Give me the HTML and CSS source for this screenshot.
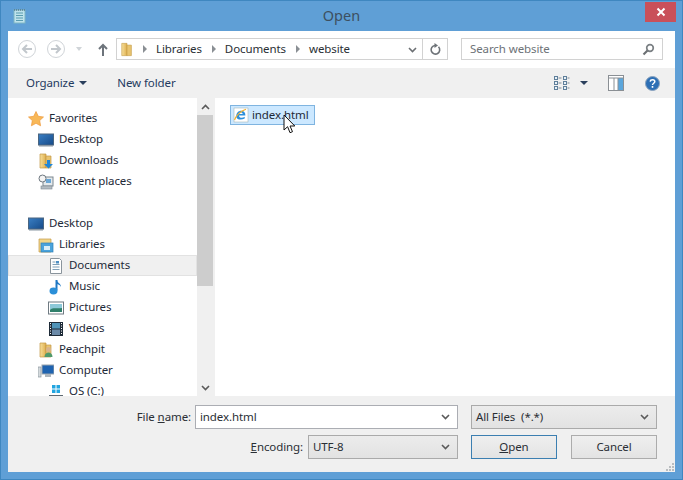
FILE: index.html
```html
<!DOCTYPE html>
<html lang="en">
<head>
<meta charset="utf-8">
<title>Open</title>
<link rel="stylesheet" href="styles.css">
</head>
<body>
<svg class="defs" width="0" height="0" aria-hidden="true">
  <defs>
    <linearGradient id="scr" x1="0" y1="0" x2="1" y2="1"><stop offset="0" stop-color="#3a7fc4"/><stop offset="1" stop-color="#164a88"/></linearGradient>
    <linearGradient id="fold" x1="0" y1="0" x2="1" y2="0"><stop offset="0" stop-color="#f6df9b"/><stop offset="1" stop-color="#dfb04f"/></linearGradient>
    <symbol id="desk" viewBox="0 0 16 16"><rect x="0.5" y="2" width="15" height="11" fill="url(#scr)" stroke="#4a6580"/><rect x="1" y="13" width="14" height="1.5" fill="#8a97a3"/></symbol>
    <symbol id="folder" viewBox="0 0 16 16"><path d="M2 1h6v14H2z" fill="url(#fold)" stroke="#c49a45" stroke-width=".7"/><path d="M8 3h5v12H8z" fill="#e9c46f" stroke="#c49a45" stroke-width=".7"/></symbol>
  </defs>
</svg>
<div class="dialog">
  <header class="titlebar">
    <svg class="app-icon" width="15" height="15" viewBox="0 0 15 15"><rect x="2" y="1" width="11" height="13" fill="#bfe3ec" stroke="#7fb6c4"/><path d="M4 4h7M4 6.5h7M4 9h7M4 11.5h7" stroke="#5b9db0"/><path d="M2 1h11" stroke="#48606a" stroke-dasharray="1 1"/></svg>
    <div class="title">Open</div>
    <div class="close"><svg width="10" height="10" viewBox="0 0 10 10"><path d="M1.5 1.5l7 7M8.500 1.500l-7 7" stroke="#fff" stroke-width="2"/></svg></div>
  </header>
  <div class="panel">
    <nav class="navbar">
      <span class="round"><svg width="12" height="10" viewBox="0 0 12 10"><path d="M11 5H2M6 1L2 5l4 4" fill="none" stroke="#c2c7cc" stroke-width="2"/></svg></span>
      <span class="round"><svg width="12" height="10" viewBox="0 0 12 10"><path d="M1 5h9M6 1l4 4-4 4" fill="none" stroke="#c2c7cc" stroke-width="2"/></svg></span>
      <span class="caret-soft"></span>
      <svg class="up" width="10" height="13" viewBox="0 0 10 13"><path d="M5 13V2M1 6l4-4 4 4" fill="none" stroke="#6d747b" stroke-width="2"/></svg>
      <div class="address">
        <svg class="crumb-icon" width="14" height="17" viewBox="0 0 14 17"><use href="#folder" width="14" height="17"/></svg>
        <span class="sep"></span><span class="crumb">Libraries</span>
        <span class="sep"></span><span class="crumb">Documents</span>
        <span class="sep"></span><span class="crumb">website</span>
        <svg class="chev addr-chev" width="9" height="6" viewBox="0 0 9 6"><path d="M1 1l3.500 3.500L8 1" fill="none" stroke="#6b6f73" stroke-width="1.600"/></svg>
        <span class="refresh"><svg width="12" height="13" viewBox="0 0 12 13"><path d="M9.500 3.800A4.300 4.300 0 1 1 6 2.500" fill="none" stroke="#6d7277" stroke-width="1.600"/><path d="M5.500 0v5L9 2.500z" fill="#6d7277"/></svg></span>
      </div>
      <div class="search">
        <span class="search-text">Search website</span>
        <svg width="13" height="13" viewBox="0 0 13 13"><circle cx="8" cy="5" r="3.300" fill="none" stroke="#7b8084" stroke-width="1.700"/><path d="M5.500 7.500L1.500 11.500" stroke="#6b6f73" stroke-width="2.200"/></svg>
      </div>
    </nav>
    <div class="toolbar">
      <span class="tool">Organize</span><span class="caret"></span>
      <span class="tool newfolder">New folder</span>
      <svg class="views" width="16" height="14" viewBox="0 0 16 14"><g fill="#e8f1f8" stroke="#5f7f9a"><rect x=".5" y=".5" width="3" height="3"/><rect x=".5" y="5.500" width="3" height="3"/><rect x=".5" y="10.500" width="3" height="3"/><rect x="9.500" y=".5" width="3" height="3"/><rect x="9.500" y="5.500" width="3" height="3"/><rect x="9.500" y="10.500" width="3" height="3"/></g><path d="M4.500 2h3M4.500 7h3M4.500 12h3M13.500 2h2M13.500 7h2M13.500 12h2" stroke="#7d8a95"/></svg>
      <span class="caret views-caret"></span>
      <svg class="pane-icon" width="16" height="16" viewBox="0 0 16 16"><rect x=".5" y=".5" width="15" height="15" fill="#fff" stroke="#8a8f94"/><rect x="10" y="3" width="5" height="12" fill="#5ba6dc"/><path d="M1 3h14M6 3v12M10 3v12" stroke="#8a8f94"/></svg>
      <svg class="help" width="15" height="15" viewBox="0 0 15 15"><circle cx="7.500" cy="7.500" r="7" fill="#2d6fb5" stroke="#8aa2bc"/><path d="M5.200 5.600c.3-2.400 4.600-2.400 4.600 0 0 1.700-2.300 1.600-2.300 3.400" fill="none" stroke="#fff" stroke-width="1.500"/><rect x="6.700" y="10" width="1.600" height="1.800" fill="#fff"/></svg>
    </div>
    <main class="browser">
      <aside class="tree">
        <div class="row lvl0"><svg width="16" height="16" viewBox="0 0 16 16"><path d="M8 .5l2.300 4.800 5.200.7-3.800 3.600.9 5.200L8 12.300l-4.600 2.500.9-5.200L.5 6l5.200-.7z" fill="#f8b858" stroke="#ee9a3c" stroke-width=".7"/></svg><span>Favorites</span></div>
        <div class="row lvl1"><svg width="16" height="16"><use href="#desk" width="16" height="16"/></svg><span>Desktop</span></div>
        <div class="row lvl1"><svg width="16" height="16" viewBox="0 0 16 16"><use href="#folder" width="16" height="16"/><path d="M9 7h3v4h3l-4.500 4.500L6 11h3z" fill="#1f86d8"/></svg><span>Downloads</span></div>
        <div class="row lvl1"><svg width="16" height="16" viewBox="0 0 16 16"><rect x="5" y="3" width="10" height="9" fill="#e4e9ec" stroke="#7c8790"/><circle cx="4.500" cy="4.500" r="3.500" fill="#f4f4f4" stroke="#6e7880"/><rect x="3" y="12" width="11" height="3" fill="#b4bcc2" stroke="#7c8790" stroke-width=".6"/><rect x="8" y="5" width="5" height="4" fill="#6aa7d6"/></svg><span>Recent places</span></div>
        <div class="row spacer"></div>
        <div class="row lvl0"><svg width="16" height="16"><use href="#desk" width="16" height="16"/></svg><span>Desktop</span></div>
        <div class="row lvl1"><svg width="16" height="16" viewBox="0 0 16 16"><path d="M1 2h12v13H1z" fill="#f0d68a" stroke="#c49a45" stroke-width=".7"/><rect x="3" y="6" width="12" height="9" fill="#4aa3dc" stroke="#2f80b8" stroke-width=".7"/><rect x="6" y="9" width="6" height="4" fill="#d8eef9"/></svg><span>Libraries</span></div>
        <div class="row lvl2 active"><svg width="16" height="16" viewBox="0 0 16 16"><path d="M2.500.5h9l2 2v13h-11z" fill="#fff" stroke="#8a949c"/><path d="M4.500 4h3M4.500 6.500h7M4.500 9h7M4.500 11.500h7" stroke="#7f9fb8"/><rect x="8" y="3" width="3" height="2.500" fill="#4d8fc4"/></svg><span>Documents</span></div>
        <div class="row lvl2"><svg width="16" height="16" viewBox="0 0 16 16"><path d="M8.500 1v10.500" stroke="#1f78c4" stroke-width="2"/><ellipse cx="5.500" cy="12" rx="4" ry="3.400" fill="#2b8fd8"/><path d="M9 1c0 3 4 3 4 7-1-2-2-2.500-4-3z" fill="#1f78c4"/></svg><span>Music</span></div>
        <div class="row lvl2"><svg width="16" height="16" viewBox="0 0 16 16"><rect x=".5" y="2" width="15" height="12" fill="#fff" stroke="#6f7a82"/><rect x="2" y="4" width="12" height="8" fill="#8cc8d8"/><path d="M2 10c3-3 6-1 12-2v4H2z" fill="#2f7f6a"/></svg><span>Pictures</span></div>
        <div class="row lvl2"><svg width="16" height="16" viewBox="0 0 16 16"><rect x="1" y="1" width="14" height="14" fill="#1e2b38"/><rect x="4" y="2" width="8" height="5.500" fill="#4f93b8"/><rect x="4" y="8.500" width="8" height="5.500" fill="#6b8aa8"/><path d="M2 2.500h1M2 5h1M2 7.500h1M2 10h1M2 12.500h1M13 2.500h1M13 5h1M13 7.500h1M13 10h1M13 12.500h1" stroke="#fff"/></svg><span>Videos</span></div>
        <div class="row lvl1"><svg width="16" height="16" viewBox="0 0 16 16"><use href="#folder" width="16" height="16"/><circle cx="10.500" cy="7.500" r="2.500" fill="#d9b48c"/><path d="M6.500 15c0-6 8-6 8 0z" fill="#4f9a6c"/></svg><span>Peachpit</span></div>
        <div class="row lvl1"><svg width="16" height="16" viewBox="0 0 16 16"><rect x="0" y="4" width="3" height="10" fill="#d5dadd" stroke="#8a949c" stroke-width=".7"/><rect x="4" y="2" width="12" height="9" fill="#1f63b0" stroke="#9aa4ac"/><rect x="7" y="11" width="6" height="3" fill="#aeb6bc"/></svg><span>Computer</span></div>
        <div class="row lvl2 clip"><svg width="16" height="16" viewBox="0 0 16 16"><path d="M4 1h3.500v3.500H4zM8.500 1H12v3.500H8.500zM4 5.500h3.500V9H4zM8.500 5.500H12V9H8.500z" fill="#22a5e0"/><path d="M1 11h14v4H1z" fill="#5f6a72"/></svg><span>OS (C:)</span></div>
      </aside>
      <div class="scrollbar">
        <div class="sb-btn"><svg width="9" height="6" viewBox="0 0 9 6"><path d="M1 5l3.500-3.500L8 5" fill="none" stroke="#5a5a5a" stroke-width="1.600"/></svg></div>
        <div class="sb-thumb"></div>
        <div class="sb-track"></div>
        <div class="sb-btn"><svg width="9" height="6" viewBox="0 0 9 6"><path d="M1 1l3.500 3.500L8 1" fill="none" stroke="#5a5a5a" stroke-width="1.600"/></svg></div>
      </div>
      <section class="files">
        <div class="file">
          <svg width="16" height="16" viewBox="0 0 16 16"><rect x="1" y="1" width="14" height="14" fill="#fff" stroke="#9aa" stroke-width=".5"/><path d="M3.200 9.400c.1-3.600 2.200-5.700 5-5.700 2.600 0 4.300 1.900 4.200 4.700H6c.1 2.800 3.600 3 5.700 1.300v1.900c-3.900 2-8.600.9-8.500-2.200zM6 6.900h3.700C9.700 4.900 6.300 4.900 6 6.900z" fill="#2a8fdc"/><path d="M1.500 13c1-3.700 6-9 11.500-10.700" fill="none" stroke="#f2b233" stroke-width="1.200"/></svg>
          <span>index.html</span>
        </div>
        <svg class="cursor" width="13" height="20" viewBox="0 0 13 20"><path d="M1 1v15l3.600-3.300 2.400 6 2.500-1-2.500-5.700h4.800z" fill="#fff" stroke="#111"/></svg>
      </section>
    </main>
  </div>
  <footer class="bottom">
    <label class="lbl name-lbl"><span>File <u>n</u>ame:</span></label>
    <div class="field input"><span>index.html</span><svg class="chev" width="9" height="6" viewBox="0 0 9 6"><path d="M1 1l3.500 3.500L8 1" fill="none" stroke="#5a5a5a" stroke-width="1.600"/></svg></div>
    <div class="field select types"><span>All Files&nbsp; (*.*)</span><svg class="chev" width="9" height="6" viewBox="0 0 9 6"><path d="M1 1l3.500 3.500L8 1" fill="none" stroke="#5a5a5a" stroke-width="1.600"/></svg></div>
    <label class="lbl enc-lbl"><span><u>E</u>ncoding:</span></label>
    <div class="field select enc"><span>UTF-8</span><svg class="chev" width="9" height="6" viewBox="0 0 9 6"><path d="M1 1l3.500 3.500L8 1" fill="none" stroke="#5a5a5a" stroke-width="1.600"/></svg></div>
    <div class="buttons">
      <button class="btn primary"><u>O</u>pen</button>
      <button class="btn">Cancel</button>
    </div>
    <svg class="grip" width="10" height="10" viewBox="0 0 10 10"><g fill="#b9bdc0"><rect x="7" y="1" width="2" height="2"/><rect x="4" y="4" width="2" height="2"/><rect x="7" y="4" width="2" height="2"/><rect x="1" y="7" width="2" height="2"/><rect x="4" y="7" width="2" height="2"/><rect x="7" y="7" width="2" height="2"/></g></svg>
  </footer>
</div>
</body>
</html>
```
FILE: styles.css
```css
* { box-sizing: border-box; }
html, body { margin: 0; height: 100%; }
body { font-family: "Noto Sans", "Open Sans", sans-serif; font-size: 11.5px; letter-spacing: -0.1px; color: #1e2a38; overflow: hidden; }
.defs { position: absolute; }
.dialog { width: 683px; height: 480px; display: flex; flex-direction: column; background: #5f9fd6; border: 1px solid #3f87c0; padding: 0 7px 7px; }
.titlebar { height: 30px; display: flex; align-items: center; position: relative; flex: none; }
.app-icon { margin-left: 4px; }
.title { position: absolute; left: 0; right: 0; top: 4px; text-align: center; font-size: 14.5px; line-height: 20px; letter-spacing: 0; color: #3d4f60; }
.close { position: absolute; top: 1px; right: -1px; width: 31px; height: 20px; background: #c9505a; display: flex; align-items: center; justify-content: center; }
.panel { background: #fff; flex: none; height: 365px; display: flex; flex-direction: column; }
.navbar { height: 37px; flex: none; display: flex; align-items: center; padding: 0 0 1px 10px; }
.round { width: 18px; height: 18px; border: 1.500px solid #d0d4d8; border-radius: 50%; display: flex; align-items: center; justify-content: center; margin-right: 11px; }
.caret-soft { width: 0; height: 0; border: 3.500px solid transparent; border-top: 4px solid #d0d4d8; border-bottom: 0; margin-right: 16px; }
.up { margin-right: 8px; }
.address { width: 332px; height: 22px; border: 1px solid #d2d2d2; display: flex; align-items: center; padding-left: 3px; position: relative; color: #2a2f35; }
.crumb-icon { margin-right: 9px; }
.sep { width: 0; height: 0; border: 4px solid transparent; border-left: 4px solid #8a8f94; border-right: 0; margin-right: 9px; }
.crumb { margin-right: 10px; padding-bottom: 2px; }
.addr-chev { position: absolute; right: 30px; top: 8px; }
.refresh { position: absolute; right: 0; top: 0; bottom: 0; width: 25px; border-left: 1px solid #d2d2d2; display: flex; align-items: center; justify-content: center; }
.search { width: 202px; height: 22px; border: 1px solid #d2d2d2; margin-left: 13px; display: flex; align-items: center; justify-content: space-between; padding: 0 7px 0 8px; color: #6d7277; }
.search-text { padding-bottom: 2px; }
.toolbar { height: 30px; flex: none; background: #f0f0f0; display: flex; align-items: center; padding-left: 18px; color: #1f3a5f; }
.tool { padding-bottom: 2px; }
.caret { width: 0; height: 0; border: 4px solid transparent; border-top: 4px solid #2a3f5c; border-bottom: 0; margin-left: 5px; }
.newfolder { margin-left: 30px; }
.views { margin-left: auto; }
.views-caret { margin-left: 10px; }
.pane-icon { margin-left: 20px; }
.help { margin-left: 21px; margin-right: 15px; }
.browser { flex: 1; display: flex; min-height: 0; }
.tree { width: 189px; flex: none; padding-top: 10px; color: #1e2a38; overflow: hidden; }
.row { height: 21px; display: flex; align-items: center; gap: 5px; flex: none; }
.row span, .file span, .lbl span, .field span { padding-bottom: 2px; }
.spacer { height: 21px; }
.lvl0 { padding-left: 20px; }
.lvl1 { padding-left: 30px; }
.lvl2 { padding-left: 40px; }
.active { background: #f0f0f0; border: 1px solid #e2e2e2; padding-left: 39px; }
.scrollbar { width: 16px; flex: none; display: flex; flex-direction: column; background: #f0f0f0; }
.sb-btn { height: 17px; display: flex; align-items: center; justify-content: center; flex: none; }
.sb-thumb { height: 171px; background: #cdcdcd; flex: none; }
.sb-track { flex: 1; }
.files { flex: 1; padding: 7px 0 0 15px; position: relative; border-left: 2px solid #f0f0f0; }
.file { width: 85px; height: 20px; background: #cce8ff; border: 1px solid #7fb4e0; display: flex; align-items: center; gap: 3px; padding-left: 2px; color: #1e2a38; }
.cursor { position: absolute; left: 68px; top: 16px; }
.bottom { flex: 1; background: #f0f0f0; display: grid; grid-template-columns: 60px 113px 150px 13px 186px; grid-template-rows: 24px 24px; row-gap: 6px; padding: 9px 18px 0 0; position: relative; color: #2a2f35; justify-content: end; }
.lbl { display: flex; align-items: center; justify-content: flex-end; padding-right: 4px; white-space: nowrap; }
.name-lbl { grid-column: 1; grid-row: 1; }
.enc-lbl { grid-column: 1 / 3; grid-row: 2; padding-right: 5px; }
.field { border: 1px solid #aaa; display: flex; align-items: center; justify-content: space-between; padding: 0 7px 0 4px; height: 24px; }
.input { grid-column: 2 / 4; grid-row: 1; background: #fff; border-color: #abadb3; }
.select { background: linear-gradient(#ececec, #e2e2e2); }
.types { grid-column: 5; grid-row: 1; }
.enc { grid-column: 3; grid-row: 2; }
.buttons { grid-column: 5; grid-row: 2; display: flex; justify-content: space-between; }
.btn { width: 86px; height: 24px; font: inherit; letter-spacing: inherit; color: #2a2f35; background: linear-gradient(#efefef, #e3e3e3); border: 1px solid #acacac; padding: 0 0 2px; }
.primary { border-color: #3c7fb1; }
.grip { position: absolute; right: 0; bottom: 0; }
```
